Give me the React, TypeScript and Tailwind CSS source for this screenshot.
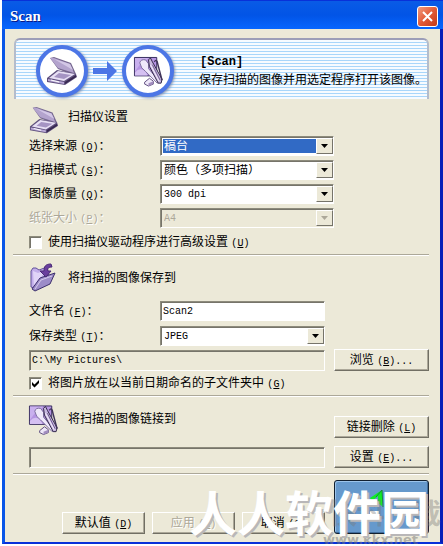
import type { ReactNode } from 'react';

const INSET =
  'border border-t-[#8d8b7c] border-l-[#8d8b7c] border-r-white border-b-white shadow-[inset_1px_1px_0_#76746a]';
const LABEL = 'w-[131px] shrink-0 whitespace-nowrap pt-px';

function Latin({ children, className = '' }: { children: ReactNode; className?: string }) {
  return (
    <span className={`font-['Liberation_Mono','Noto_Sans_CJK_SC',monospace] text-[10px] ${className}`}>{children}</span>
  );
}

function Key({ k }: { k: string }) {
  return (
    <Latin>
      (<u className="underline-offset-1">{k}</u>)
    </Latin>
  );
}

function ScannerIcon({ className }: { className: string }) {
  return (
    <svg viewBox="0 0 32 30" className={className} aria-hidden="true">
      <path d="M4 2 8 1 25 7 30 18 29 20 12 13Z" fill="#75678f" />
      <path d="M4 2 8 2 24 8 28 17 12 12Z" fill="#b3a3cd" />
      <path d="M8 3 24 8 27 14Z" fill="#d3c7e6" />
      <path d="M1 22 11 14 30 18 31 21 19 29 1 26Z" fill="#5f507d" />
      <path d="M3 22 12 15 29 18 18 25Z" fill="#e7dff4" />
      <path d="M8 21 13 17 25 19 18 23Z" fill="#a594c3" />
      <path d="M2 23 18 26 18 28 2 25Z" fill="#baa9d7" />
      <path d="M19 26 30 19 30 21 19 28Z" fill="#37284f" />
      <path d="M5 24 13 26" stroke="#fff" />
    </svg>
  );
}

function LinkIcon({ className }: { className: string }) {
  return (
    <svg viewBox="0 0 32 32" className={className} aria-hidden="true">
      <path d="M1.500 1.500H24.500V20.500H1.500Z" fill="#b594e2" stroke="#352b5c" />
      <path d="M2 2H16L7 9 2 16Z" fill="#c9b0ee" />
      <path d="M2 20V17Q7 11 13 16L15 20Z" fill="#d5c0f2" />
      <path d="M7 7Q8 3 13 4L16 8 16 13 28 27 25 28 13 16Q8 13 7 7Z" fill="#efe8fa" stroke="#7a6a9c" />
      <path d="M16 4 18 2 20 6 30 24 29 28 26 28 17 11Z" fill="#c9b9e0" stroke="#2f2646" />
      <path d="M18 9 27 26" stroke="#f5f0fc" />
      <path d="M20 9 28 25" stroke="#6f5c91" />
      <path d="M22 6Q24 3 25 6L26 10 30 25" fill="none" stroke="#40345a" strokeWidth="1.500" />
      <path d="M12 27 17 23 21 26 21 29 16 31 12 29Z" fill="#eee7f8" stroke="#605080" />
      <path d="M16 28 21 26 21 29 16 31Z" fill="#a28dbf" />
    </svg>
  );
}

function FolderIcon({ className }: { className: string }) {
  return (
    <svg viewBox="0 0 28 30" className={className} aria-hidden="true">
      <path d="M2 9 4 6 7 6 10 8 18 5 20 17 8 27 2 25Z" fill="#c3afea" stroke="#63539b" />
      <path d="M4 9 9 11 17 8 10 18 5 25Z" fill="#e1d5f8" />
      <path d="M3 27 11 16 26 11 21 22 6 29Z" fill="#9c8cc8" stroke="#3d306d" />
      <path d="M6 27 12 18 23 14" fill="none" stroke="#d6caed" />
      <path d="M22 2C16 2 15 5 15 9H11L17 15 22 9H19C18 6 20 5 23 5Z" fill="#6a3f9e" stroke="#4a2b76" />
    </svg>
  );
}

function Circle({ children }: { children: ReactNode }) {
  return (
    <div className="flex size-[52px] items-center justify-center rounded-full border-4 border-[#4c76e6] bg-white shadow-[1px_1px_3px_#7e8fae]">
      {children}
    </div>
  );
}

type ComboProps = { id: string; value: string; width: string; latin?: boolean; active?: boolean; disabled?: boolean };

function Combo({ id, value, width, latin, active, disabled }: ComboProps) {
  return (
    <div className={`relative h-5 ${width} p-[2px] ${INSET} ${disabled ? '' : 'bg-white'}`}>
      <select
        id={id}
        disabled={disabled}
        className={`block h-full w-full appearance-none pr-4 pl-px outline-none ${
          latin ? "font-['Liberation_Mono',monospace] text-[10px]" : 'text-xs leading-none'
        } ${active ? 'bg-[#316ac5] text-white outline-1 -outline-offset-1 outline-dotted outline-[#e0a020]' : ''} ${
          disabled ? 'text-[#aca899] opacity-100' : ''
        }`}
      >
        <option>{value}</option>
      </select>
      <span className="pointer-events-none absolute inset-y-px right-0 flex w-[17px] items-center justify-center border border-t-white border-r-[#76746a] border-b-[#76746a] border-l-white bg-[#ece9d8]">
        <svg viewBox="0 0 7 4" className="h-1 w-[7px]" aria-hidden="true">
          <path d="M0 0H7L3.500 4Z" fill={disabled ? '#aca899' : '#000'} />
        </svg>
      </span>
    </div>
  );
}

function Row({ id, label, k, children, disabled }: { id: string; label: string; k: string; children: ReactNode; disabled?: boolean }) {
  return (
    <div className="flex items-center">
      <label htmlFor={id} className={`${LABEL} ${disabled ? 'text-[#aca899] [text-shadow:1px_1px_0_#fff]' : ''}`}>
        {label} <Key k={k} />：
      </label>
      {children}
    </div>
  );
}

function Check({ id, label, k, checked }: { id: string; label: string; k: string; checked?: boolean }) {
  return (
    <div className="flex h-4 items-center gap-[6px]">
      <span className="relative size-[13px]">
        <input id={id} type="checkbox" defaultChecked={checked} className={`peer block size-[13px] appearance-none bg-white ${INSET}`} />
        <svg viewBox="0 0 13 13" className="pointer-events-none absolute inset-0 hidden size-[13px] peer-checked:block" aria-hidden="true">
          <path d="M3 5 5.500 7.500 10 3V6L5.500 10.500 3 8Z" fill="#000" />
        </svg>
      </span>
      <label htmlFor={id} className="pt-px whitespace-nowrap">
        {label} <Key k={k} />
      </label>
    </div>
  );
}

function Btn({ label, k, dots, width = 'w-[95px]', disabled }: { label: string; k: string; dots?: boolean; width?: string; disabled?: boolean }) {
  return (
    <button
      type="button"
      disabled={disabled}
      className={`h-[22px] shrink-0 ${width} whitespace-nowrap border border-t-white border-r-[#716f64] border-b-[#716f64] border-l-white bg-[#ece9d8] pt-px shadow-[inset_-1px_-1px_0_#aca899] ${
        disabled ? 'text-[#aca899] [text-shadow:1px_1px_0_#fff]' : ''
      }`}
    >
      {label} <Key k={k} />
      {dots && <Latin>...</Latin>}
    </button>
  );
}

function Rule() {
  return <hr className="-ml-4 h-[2px] border-t border-b border-t-[#aca899] border-b-white" />;
}

export default function App() {
  return (
    <div className="relative overflow-hidden bg-white pb-[2px] pl-[2px] font-['Liberation_Sans','Noto_Sans_CJK_SC',sans-serif] text-xs leading-4 text-black">
      <div className="border-r-[3px] border-b-2 border-l-[3px] border-r-[#0620b8] border-b-[#0831d9] border-l-[#0855e8] bg-[#ece9d8]">
        <header className="-mx-[3px] flex h-[29px] items-center justify-between border-t border-[#0831d9] bg-linear-to-b from-[#0a5be6] via-[#0254e6] to-[#0766ff] pt-[2px] pr-[5px] pl-2">
          <h1 className="font-['Liberation_Serif',serif] text-[15px] font-bold text-white [text-shadow:1px_1px_0_#0a1883]">Scan</h1>
          <button type="button" aria-label="Close" className="flex size-[21px] items-center justify-center rounded-[3px] border border-white bg-linear-to-br from-[#f09a7d] via-[#e25a37] to-[#c43a14]">
            <svg viewBox="0 0 11 11" className="size-[11px]" aria-hidden="true">
              <path d="M1 1 10 10M10 1 1 10" stroke="#fff" strokeWidth="2" />
            </svg>
          </button>
        </header>

        <main className="pr-[11px] pb-2 pl-6">
          <section className="mt-[9px] -ml-[15px] flex h-[61px] items-center rounded-t-md border-t-2 border-r-2 border-l-2 border-t-[#9c9eb8] border-r-[#b4bccb] border-l-[#b4bccb] bg-[repeating-linear-gradient(to_bottom,#f7fbff_0px,#f7fbff_2px,#a9d6fa_2px,#a9d6fa_3px)] pt-[3px] pl-5">
            <Circle>
              <ScannerIcon className="h-[30px] w-8" />
            </Circle>
            <svg viewBox="0 0 24 20" className="mx-[5px] h-5 w-6" aria-hidden="true">
              <path d="M0 7H14V0L24 10 14 20V13H0Z" fill="#4c76e6" />
            </svg>
            <Circle>
              <LinkIcon className="size-[31px]" />
            </Circle>
            <div className="ml-[25px] leading-[18px] whitespace-nowrap">
              <p className="pl-px font-['Liberation_Mono',monospace] font-bold">[Scan]</p>
              <p>保存扫描的图像并用选定程序打开该图像。</p>
            </div>
          </section>

          <section className="pt-[6px]">
            <div className="flex h-[30px] items-start gap-[9px]">
              <ScannerIcon className="h-[30px] w-[30px]" />
              <h2 className="pt-1">扫描仪设置</h2>
            </div>
            <div className="mt-px flex flex-col gap-1">
              <Row id="source" label="选择来源" k="O"><Combo id="source" value="稿台" width="w-[174px]" active /></Row>
              <Row id="mode" label="扫描模式" k="S"><Combo id="mode" value="颜色（多项扫描）" width="w-[174px]" /></Row>
              <Row id="quality" label="图像质量" k="Q"><Combo id="quality" value="300 dpi" width="w-[174px]" latin /></Row>
              <Row id="paper" label="纸张大小" k="P" disabled><Combo id="paper" value="A4" width="w-[174px]" latin disabled /></Row>
            </div>
            <div className="mt-[6px] mb-1">
              <Check id="advanced" label="使用扫描仪驱动程序进行高级设置" k="U" />
            </div>
          </section>
          <Rule />

          <section>
            <div className="mt-[6px] flex h-[30px] items-center gap-[11px]">
              <FolderIcon className="h-[30px] w-7" />
              <h2 className="pt-[2px]">将扫描的图像保存到</h2>
            </div>
            <div className="mt-[9px] flex flex-col gap-[5px]">
              <Row id="filename" label="文件名" k="F">
                <input id="filename" defaultValue="Scan2" className={`h-5 w-[165px] bg-white px-[2px] font-['Liberation_Mono',monospace] text-[10px] outline-none ${INSET}`} />
              </Row>
              <Row id="type" label="保存类型" k="T"><Combo id="type" value="JPEG" width="w-[165px]" latin /></Row>
            </div>
            <div className="mt-[3px] mb-1 flex items-center gap-[9px]">
              <input aria-label="Folder" readOnly defaultValue={'C:\\My Pictures\\'} className={`h-[21px] min-w-0 flex-1 px-[2px] font-['Liberation_Mono',monospace] text-[10px] outline-none ${INSET}`} />
              <Btn label="浏览" k="B" dots />
            </div>
            <div className="mb-1">
              <Check id="dated" label="将图片放在以当前日期命名的子文件夹中" k="G" checked />
            </div>
          </section>
          <Rule />

          <section className="mb-[5px]">
            <div className="mt-[7px] flex h-[34px] items-start">
              <LinkIcon className="mr-[9px] -ml-px h-8 w-[31px]" />
              <h2 className="flex-1 pt-[7px]">将扫描的图像链接到</h2>
              <div className="self-end">
                <Btn label="链接删除" k="L" />
              </div>
            </div>
            <div className="mt-2 flex items-center gap-[9px]">
              <input aria-label="Linked program" readOnly className={`h-[21px] min-w-0 flex-1 ${INSET}`} />
              <Btn label="设置" k="E" dots />
            </div>
          </section>
          <Rule />

          <footer className="mt-[5px] flex items-end justify-end">
            <div className="mr-[9px] flex gap-[7px]">
              <Btn label="默认值" k="D" width="w-[83px]" />
              <Btn label="应用" k="A" width="w-[83px]" disabled />
              <Btn label="取消" k="C" width="w-[83px]" />
            </div>
            <button type="button" aria-label="Scan" className="flex h-[54px] w-[95px] shrink-0 justify-center rounded-[3px] border border-[#12202f] bg-[#6699cc] pt-2 shadow-[inset_1px_1px_0_#9cc4ea,inset_-1px_-1px_0_#416d9c]">
              <svg viewBox="0 0 28 36" className="h-9 w-7" aria-hidden="true">
                <path d="M2 9 14 1V17L10 14V7L4 12Z" fill="#10ed26" />
                <path d="M8 8 14 1 15 18" fill="none" stroke="#168b38" />
                <path d="M2 22H11V25H2Z" fill="#fff" />
              </svg>
            </button>
          </footer>
        </main>
      </div>

      <div className="pointer-events-none absolute right-0 bottom-0 h-[66px] w-[260px] select-none">
        <span className="absolute right-[2px] bottom-5 font-['Noto_Sans_CJK_SC',sans-serif] text-[28px] leading-7 font-bold whitespace-nowrap text-[#77777766]">快科下载</span>
        <span className="absolute right-[25px] bottom-0 font-['DejaVu_Sans',sans-serif] text-[13px] leading-3 font-bold text-[#77777780]">www.kkx.net</span>
        <span className="absolute right-[14px] bottom-3 font-['Noto_Sans_CJK_SC',sans-serif] text-5xl leading-[48px] font-bold whitespace-nowrap text-white [text-shadow:2px_2px_0_#b9b7b8]">人人软件园</span>
      </div>
    </div>
  );
}
